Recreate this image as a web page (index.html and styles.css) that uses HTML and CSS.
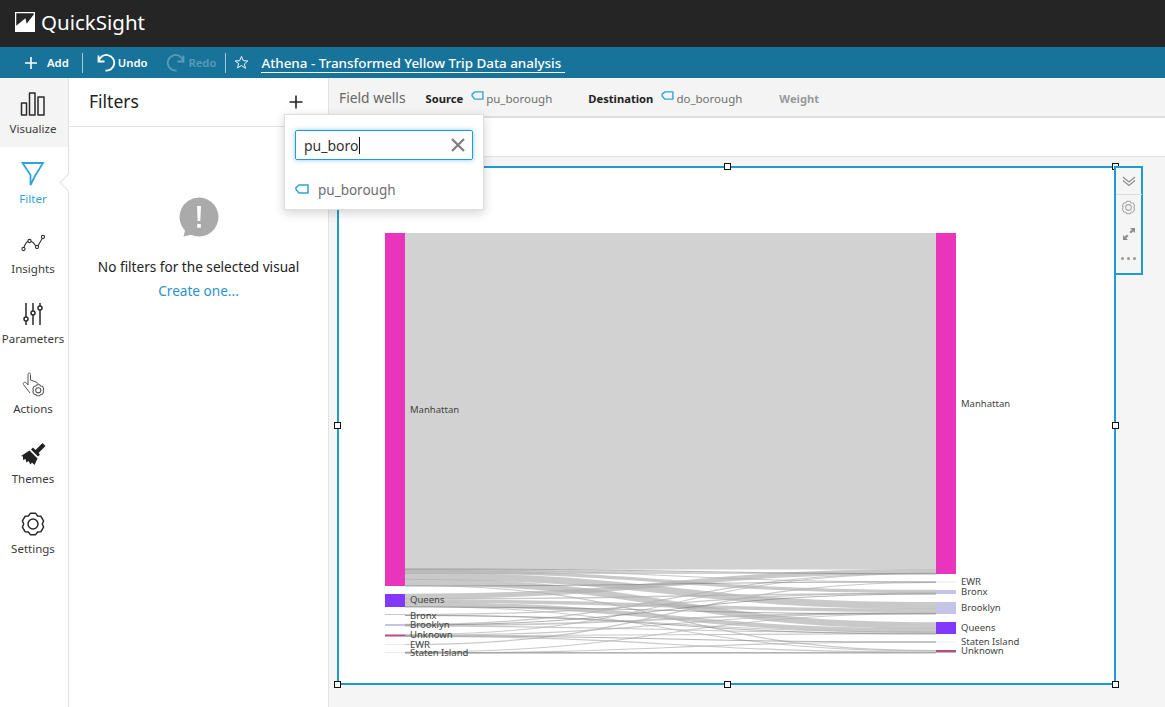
FILE: index.html
```html
<!DOCTYPE html>
<html lang="en">
<head>
<meta charset="utf-8">
<title>QuickSight</title>
<link rel="stylesheet" href="styles.css">
</head>
<body>
<header class="topbar">
  <svg class="logo" viewBox="0 0 24 24"><path fill="#fff" d="M0 0h24v24H0z"/><path fill="#252525" d="M1.500 1.500h21V3L14 14.200 12.500 7.500 1.500 16.500z"/></svg>
  <span class="brand">QuickSight</span>
</header>
<nav class="toolbar">
  <button class="tool"><svg class="ic-add" viewBox="0 0 14 14"><path d="M7 1v12M1 7h12"/></svg>Add</button>
  <span class="tsep first"></span>
  <button class="tool"><svg class="ic-undo" viewBox="0 0 20 18"><path d="M2.500 1.500v6h6M2.800 7.300A7.800 7.800 0 1 1 9.500 16.500"/></svg>Undo</button>
  <button class="tool off"><svg class="ic-undo" viewBox="0 0 20 18"><path d="M17.500 1.500v6h-6M17.200 7.300A7.800 7.800 0 1 0 10.500 16.500"/></svg>Redo</button>
  <span class="tsep second"></span>
  <svg class="ic-star" viewBox="0 0 16 16"><path d="M8 1.500l1.900 4.500 4.800.4-3.600 3.100 1.100 4.700L8 11.200l-4.200 2.500 1.100-4.700L1.300 6.400 6.100 6z"/></svg>
  <span class="title">Athena - Transformed Yellow Trip Data analysis</span>
</nav>
<div class="workspace">
  <aside class="rail">
    <div class="rail-item current">
      <svg class="rail-ic" viewBox="0 0 26 26"><path d="M1.500 12h5v12h-5zM9.500 2h5.500v22H9.500zM18 6h6v18h-6z"/></svg>
      <span>Visualize</span>
    </div>
    <div class="rail-item active">
      <svg class="rail-ic" viewBox="0 0 26 26"><path d="M2.500 2h20.500l-8 13-4.500 9V14z"/></svg>
      <span>Filter</span>
    </div>
    <div class="rail-item">
      <svg class="rail-ic fine" viewBox="0 0 26 26"><circle cx="3.500" cy="18" r="1.600"/><circle cx="9.500" cy="10" r="1.600"/><circle cx="17" cy="16" r="1.600"/><circle cx="23" cy="6" r="1.600"/><path d="M4 16.500c.8-2.500 2.500-5.500 4.200-6.200M11 10.300c1.800.5 3.500 2.500 4.800 4.700M18 14.700l4.200-7.300"/></svg>
      <span>Insights</span>
    </div>
    <div class="rail-item">
      <svg class="rail-ic" viewBox="0 0 26 26"><path d="M6 2v14M6 20v4M13 2v8M13 14v10M20 2v3M20 9v15"/><circle cx="6" cy="18" r="2"/><circle cx="13" cy="12" r="2"/><circle cx="20" cy="7" r="2"/></svg>
      <span>Parameters</span>
    </div>
    <div class="rail-item">
      <svg class="rail-ic thin" viewBox="0 0 26 26"><path d="M10 22L3.500 13.500C2.500 11.500 5 10.500 6.500 12L8 14V3.500C8 1.500 10.500 1.500 10.500 3.500V9l5.500 2c1.500.6 2 1.200 2 2"/><g transform="translate(11.500 12.500) scale(.52)"><path stroke-width="2" d="M10.340 2.330h5.320l1.990 2.620 3.260.41 2.660 4.610L22.300 13l1.270 3.030-2.660 4.610-3.260.41-1.990 2.620h-5.320l-1.990-2.620-3.260-.41-2.660-4.610L3.700 13 2.430 9.970l2.660-4.610 3.260-.41z"/><circle stroke-width="2" cx="13" cy="13" r="5"/></g></svg>
      <span>Actions</span>
    </div>
    <div class="rail-item">
      <svg class="rail-ic" viewBox="0 0 26 26"><path class="solid" d="M22.500 2l3 3-7 7-3-3zM13 6.500l7 7-2 2-7-7zM9.500 9.500l8 8-3 6.500-2.500-2.500-1.500 2-2-3.500-2 1.500-1-3.500-2.500 1v-3.500l-2-.5z"/></svg>
      <span>Themes</span>
    </div>
    <div class="rail-item">
      <svg class="rail-ic" viewBox="0 0 26 26"><path d="M10.340 2.330h5.320l1.990 2.620 3.260.41 2.660 4.610L22.300 13l1.270 3.030-2.660 4.610-3.260.41-1.990 2.620h-5.320l-1.990-2.620-3.260-.41-2.660-4.610L3.700 13 2.430 9.970l2.660-4.610 3.260-.41z"/><circle cx="13" cy="13" r="5"/></svg>
      <span>Settings</span>
    </div>
  </aside>
  <section class="panel">
    <div class="panel-head">
      <h2>Filters</h2>
      <svg class="panel-add" viewBox="0 0 14 14"><path d="M7 .5v13M.5 7h13"/></svg>
    </div>
    <div class="empty">
      <svg class="empty-ic" viewBox="0 0 40 40"><path fill="#aaa" d="M20 .500a19.500 19.500 0 1 1-8 37.300L4.500 39.500l1.500-6A19.500 19.500 0 0 1 20 .500z"/><path fill="#fff" d="M18 9h4l-.7 15h-2.600zM18.200 27h3.600v3.800h-3.600z"/></svg>
      <p class="empty-text">No filters for the selected visual</p>
      <a class="empty-link">Create one...</a>
    </div>
    <div class="popover">
      <div class="search">
        <span class="search-text">pu_boro</span>
        <svg class="search-x" viewBox="0 0 14 14"><path d="M1 1l12 12M13 1L1 13"/></svg>
      </div>
      <div class="result">
        <svg class="tag" viewBox="0 0 14 10"><path d="M4 1h9v8H4L1 5.500V3.500z"/></svg>
        <span>pu_borough</span>
      </div>
    </div>
  </section>
  <main class="main">
    <div class="wells">
      <span class="wells-title">Field wells</span>
      <b class="well-label src">Source</b>
      <svg class="tag small" viewBox="0 0 14 10"><path d="M4 1h9v8H4L1 5.500V3.500z"/></svg>
      <span class="well-value">pu_borough</span>
      <b class="well-label dst">Destination</b>
      <svg class="tag small" viewBox="0 0 14 10"><path d="M4 1h9v8H4L1 5.500V3.500z"/></svg>
      <span class="well-value">do_borough</span>
      <b class="well-label weight">Weight</b>
    </div>
    <div class="strip"></div>
    <div class="canvas">
      <div class="visual">
        <svg class="sankey" viewBox="0 0 775 515">
          <g transform="translate(-339 -168)">
            <path fill="#d2d2d2" d="M405 233h531v336.500H405z"/>
            <path fill="#d2d2d2" d="M405 569.500C670 569.500 670 574 936 574H405z"/>
            <g class="flows">
              <path stroke-width="1" d="M405 569.500C670 569.500 670 582 936 582"/>
              <path stroke-width="3.400" d="M405 571.500C670 571.500 670 591.500 936 591.500"/>
              <path stroke-width="7" d="M405 576.200C670 576.200 670 605.500 936 605.500"/>
              <path stroke-width="6.500" d="M405 582C670 582 670 625.500 936 625.500"/>
              <path stroke-width="1.200" d="M405 585.500C670 585.500 670 650.500 936 650.500"/>
              <path stroke-width="5" d="M405 596.200C670 596.200 670 571.500 936 571.500"/>
              <path stroke-width="1.400" d="M405 599C670 599 670 593.500 936 593.500"/>
              <path stroke-width="3.400" d="M405 601C670 601 670 610.500 936 610.500"/>
              <path stroke-width="4.500" d="M405 604.500C670 604.500 670 630.500 936 630.500"/>
              <path stroke-width="1" d="M405 606.500C670 606.500 670 651 936 651"/>
              <path stroke-width="1.200" d="M405 614.500C670 614.500 670 593 936 593"/>
              <path stroke-width="1" d="M405 615.200C670 615.200 670 632 936 632"/>
              <path stroke-width="1.200" d="M405 624.300C670 624.300 670 573 936 573"/>
              <path stroke-width="1.800" d="M405 625.300C670 625.300 670 613 936 613"/>
              <path stroke-width="1.200" d="M405 626C670 626 670 633 936 633"/>
              <path stroke-width="1" d="M405 634.500C670 634.500 670 573.500 936 573.500"/>
              <path stroke-width="1.200" d="M405 635.300C670 635.300 670 613 936 613"/>
              <path stroke-width="1.200" d="M405 636C670 636 670 633.500 936 633.500"/>
              <path stroke-width="1.200" d="M405 636.500C670 636.500 670 652 936 652"/>
              <path stroke-width="1.200" d="M405 644.500C670 644.500 670 582.500 936 582.500"/>
              <path stroke-width="1" d="M405 652C670 652 670 613.500 936 613.500"/>
              <path stroke-width="1.200" d="M405 652.700C670 652.700 670 652.500 936 652.500"/>
              <path stroke-width="1.200" d="M405 653C670 653 670 642 936 642"/>
            </g>
            <g class="flows dark">
              <path d="M405 569C670 569 670 573 936 574"/>
              <path d="M405 586C670 586 670 582 936 582"/>
              <path d="M405 607C670 607 670 614 936 614"/>
              <path d="M405 615.500C670 615.500 670 634 936 634"/>
              <path d="M405 625C670 625 670 594 936 594"/>
              <path d="M405 636C670 636 670 642 936 642"/>
              <path d="M405 653C670 653 670 653 936 653"/>
            </g>
            <path fill="#e835bb" d="M385 233h20v353h-20zM936 233h20v341h-20z"/>
            <path fill="#8338fd" d="M385 594h20v13h-20zM936 622h20v12h-20z"/>
            <path fill="#c3c4e6" d="M385 614h20v1h-20zM385 624h20v2h-20zM936 590h20v4h-20zM936 602h20v12h-20z"/>
            <path fill="#b0507f" d="M385 634.500h20v2h-20zM936 650h20v2.500h-20z"/>
            <path fill="#f3e4d8" d="M936 581.500h20v1h-20z"/>
            <path fill="#ecebfa" d="M385 644h20v1h-20zM385 652h20v1h-20zM936 641.500h20v1h-20z"/>
            <g class="labels">
              <text x="410" y="413">Manhattan</text>
              <text x="410" y="603">Queens</text>
              <text x="410" y="619">Bronx</text>
              <text x="410" y="628">Brooklyn</text>
              <text x="410" y="638">Unknown</text>
              <text x="410" y="648">EWR</text>
              <text x="410" y="656">Staten Island</text>
              <text x="961" y="407">Manhattan</text>
              <text x="961" y="585">EWR</text>
              <text x="961" y="595">Bronx</text>
              <text x="961" y="611">Brooklyn</text>
              <text x="961" y="631">Queens</text>
              <text x="961" y="645">Staten Island</text>
              <text x="961" y="654">Unknown</text>
            </g>
          </g>
        </svg>
        <span class="handle h-tl"></span><span class="handle h-tc"></span><span class="handle h-tr"></span>
        <span class="handle h-ml"></span><span class="handle h-mr"></span>
        <span class="handle h-bl"></span><span class="handle h-bc"></span><span class="handle h-br"></span>
        <div class="vis-menu">
          <svg class="vm-chev" viewBox="0 0 14 10"><path d="M1 1l6 5 6-5M1 4.500l6 5 6-5"/></svg>
          <svg class="vm-ic" viewBox="0 0 26 26"><path d="M10.340 2.330h5.320l1.990 2.620 3.260.41 2.660 4.610L22.300 13l1.270 3.030-2.660 4.610-3.260.41-1.990 2.620h-5.320l-1.990-2.620-3.260-.41-2.660-4.610L3.700 13 2.430 9.970l2.660-4.610 3.260-.41z"/><circle cx="13" cy="13" r="5"/></svg>
          <svg class="vm-ic solid" viewBox="0 0 12 12"><path d="M7 0h5v5l-1.800-1.800L8 5.500 6.500 4l2.300-2.200zM5 12H0V7l1.800 1.800L4 6.500 5.500 8 3.200 10.200z"/></svg>
          <div class="vm-dots"><i></i><i></i><i></i></div>
        </div>
      </div>
    </div>
  </main>
</div>
</body>
</html>
```
FILE: styles.css
```css
* { box-sizing: border-box; }
html, body { height: 100%; }
body {
  margin: 0;
  width: 1165px;
  height: 707px;
  overflow: hidden;
  display: flex;
  flex-direction: column;
  font-family: "Noto Sans", "Open Sans", sans-serif;
  color: #222;
  background: #fff;
}
svg { display: block; flex: none; }

.topbar {
  height: 47px;
  flex: none;
  background: #252525;
  display: flex;
  align-items: center;
  padding: 0 0 3px 15px;
  gap: 6px;
}
.logo { width: 20px; height: 20px; }
.brand { color: #fff; font-size: 20.500px; line-height: 24px; margin-top: -1px; }

.toolbar {
  height: 31px;
  flex: none;
  background: #18739b;
  display: flex;
  align-items: center;
  padding-left: 24px;
  color: #fff;
}
.tool {
  display: flex;
  align-items: center;
  border: 0;
  padding: 0;
  background: none;
  color: #fff;
  font: 600 11.300px "Noto Sans", sans-serif;
}
.tool svg { fill: none; stroke: currentColor; }
.tool.off { color: #5b9cb9; margin-left: 19px; }
.ic-add { width: 14px; height: 14px; margin-right: 9px; stroke-width: 1.600; }
.ic-undo { width: 20px; height: 18px; margin-right: 2px; stroke-width: 1.800; }
.tsep { width: 1px; height: 20px; background: #a8c6d4; }
.tsep.first { margin: 0 13px; }
.tsep.second { margin: 0 8px 0 9px; }
.ic-star { width: 15px; height: 15px; fill: none; stroke: #fff; stroke-width: 1; margin-right: 12px; }
.title {
  font-size: 13.400px;
  font-weight: 500;
  border-bottom: 1.500px solid #fff;
  line-height: 18px;
  padding-right: 4px;
  margin-top: 1px;
}

.workspace { flex: 1; display: flex; min-height: 0; }

.rail {
  width: 69px;
  flex: none;
  border-right: 1px solid #e2e2e2;
  display: flex;
  flex-direction: column;
  font-size: 11.500px;
  color: #3a3a3a;
}
.rail-item {
  height: 70px;
  flex: none;
  display: flex;
  flex-direction: column;
  align-items: center;
  padding: 13px 2px 0 0;
  gap: 4px;
  position: relative;
}
.rail-item span { line-height: 16px; white-space: nowrap; }
.rail-ic { width: 26px; height: 26px; fill: none; stroke: #2a2a2a; stroke-width: 1.500; stroke-linejoin: round; }
.rail-ic.fine { stroke-width: 1.100; stroke: #333; }
.rail-ic.thin { stroke-width: 1; stroke: #555; }
.rail-ic .solid { fill: #222; stroke: none; }
.current { background: #f4f4f4; height: 69px; margin-bottom: 1px; }
.active { color: #2ea3dc; }
.active .rail-ic { stroke: #2ea3dc; stroke-width: 1.800; stroke-linejoin: miter; }
.active::after {
  content: "";
  position: absolute;
  left: 62px;
  top: 28px;
  width: 12px;
  height: 12px;
  background: #fff;
  border-left: 1px solid #e2e2e2;
  border-bottom: 1px solid #e2e2e2;
  transform: rotate(45deg);
}

.panel {
  width: 260px;
  flex: none;
  border-right: 1px solid #e2e2e2;
  position: relative;
  display: flex;
  flex-direction: column;
}
.panel-head {
  height: 49px;
  flex: none;
  border-bottom: 1px solid #e2e2e2;
  display: flex;
  align-items: center;
  justify-content: space-between;
  padding: 0 25px 2px 20px;
}
.panel-head h2 { margin: 0; font-size: 17.500px; font-weight: 400; color: #222; }
.panel-add { width: 14px; height: 14px; fill: none; stroke: #222; stroke-width: 1.600; margin-top: 2px; }
.empty {
  display: flex;
  flex-direction: column;
  align-items: center;
  padding-top: 70px;
  font-size: 13.600px;
}
.empty-ic { width: 40px; height: 40px; }
.empty-text { margin: 21px 0 0; line-height: 18px; color: #222; }
.empty-link { margin-top: 6px; line-height: 18px; color: #2b93cc; }

.popover {
  position: absolute;
  z-index: 5;
  left: 215px;
  top: 36px;
  width: 200px;
  height: 96px;
  background: #fff;
  border: 1px solid #ddd;
  box-shadow: 0 3px 10px rgba(0, 0, 0, .18);
  padding: 15px 10px 0;
}
.search {
  height: 30px;
  border: 1px solid #1f9cd8;
  border-radius: 2px;
  box-shadow: 0 0 5px rgba(46, 163, 220, .55);
  display: flex;
  align-items: center;
  justify-content: space-between;
  padding: 0 7px 0 8px;
}
.search-text {
  font-size: 14px;
  color: #333;
  border-right: 1px solid #111;
  line-height: 17px;
}
.search-x { width: 14px; height: 14px; fill: none; stroke: #7d7d7d; stroke-width: 2.200; }
.result {
  display: flex;
  align-items: center;
  gap: 9px;
  margin-top: 20px;
  color: #6f6f6f;
  font-size: 13.500px;
  line-height: 20px;
}
.tag { width: 14px; height: 10px; fill: none; stroke: #2ea3dc; stroke-width: 1.500; margin-top: -3px; }

.main { flex: 1; min-width: 0; display: flex; flex-direction: column; background: #f5f5f5; }
.wells {
  height: 40px;
  flex: none;
  background: #f4f4f4;
  border-bottom: 2px solid #dcdcdc;
  display: flex;
  align-items: center;
  padding: 2px 0 0 10px;
  font-size: 11.500px;
}
.wells-title { font-size: 13.800px; color: #666; margin-right: 20px; margin-top: -1px; }
.well-label { font-weight: 700; font-size: 11.200px; color: #222; margin-right: 8px; }
.well-label.dst { margin-left: 36px; }
.well-label.weight { margin-left: 37px; color: #999; }
.well-value { color: #6f6f6f; margin-left: 2px; }
.tag.small { width: 13px; height: 9px; margin-top: -5px; }
.strip { height: 39px; flex: none; background: #fff; border-bottom: 1px solid #e2e2e2; }
.canvas { flex: 1; padding: 9px 0 0 8px; min-height: 0; }

.visual {
  position: relative;
  width: 779px;
  height: 519px;
  background: #fff;
  border: 2px solid #1f9cd2;
}
.sankey { width: 775px; height: 515px; }
.flows path { fill: none; stroke: #b0b0b0; stroke-opacity: .68; }
.flows.dark path { stroke: #777; stroke-width: .8; stroke-opacity: .7; }
.labels text { font-size: 9.500px; fill: #444; font-family: "Noto Sans", sans-serif; }

.handle {
  position: absolute;
  width: 7px;
  height: 7px;
  background: #fff;
  border: 1px solid #111;
}
.h-tl { left: -5px; top: -5px; }
.h-tc { left: 385px; top: -5px; }
.h-tr { right: -5px; top: -5px; }
.h-ml { left: -5px; top: 254px; }
.h-mr { right: -5px; top: 254px; }
.h-bl { left: -5px; bottom: -5px; }
.h-bc { left: 385px; bottom: -5px; }
.h-br { right: -5px; bottom: -5px; }

.vis-menu {
  position: absolute;
  left: 775px;
  top: -2px;
  width: 29px;
  height: 109px;
  background: #f5f5f5;
  border: 2px solid #1f9cd2;
  display: flex;
  flex-direction: column;
  align-items: center;
}
.vm-chev { width: 14px; height: 10px; margin-top: 8px; fill: none; stroke: #8a8a8a; stroke-width: 1.100; box-sizing: content-box; padding: 0 6px 8px; border-bottom: 1px solid #ddd; }
.vm-ic { width: 15px; height: 15px; margin-top: 5px; fill: none; stroke: #a5a5a5; stroke-width: 1.800; }
.vm-ic.solid { width: 12px; height: 12px; margin-top: 13px; fill: #8c8c8c; stroke: none; }
.vm-dots { display: flex; gap: 3px; margin-top: 17px; }
.vm-dots i { width: 3px; height: 3px; border-radius: 50%; background: #999; }
```
